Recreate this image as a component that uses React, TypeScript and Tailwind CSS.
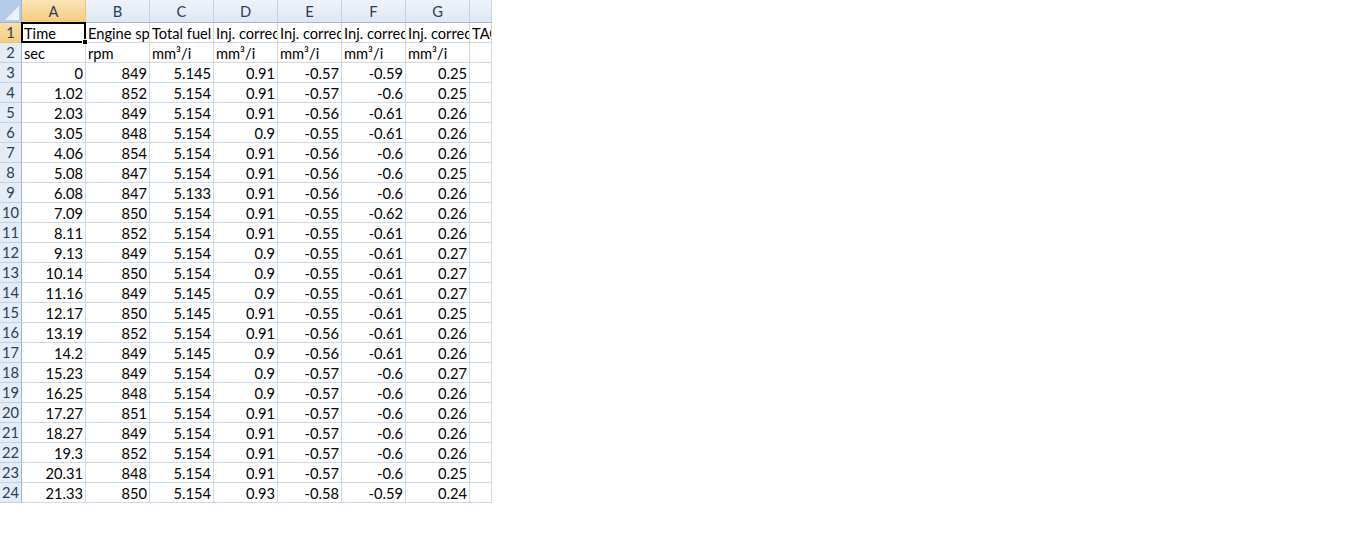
import React from "react";

const cols = ["A", "B", "C", "D", "E", "F", "G", "H"];

const row1 = ["Time", "Engine speed", "Total fuel", "Inj. correction", "Inj. correction", "Inj. correction", "Inj. correction", "TAC"];
const row2 = ["sec", "rpm", "mm³/i", "mm³/i", "mm³/i", "mm³/i", "mm³/i", ""];

const data: string[][] = [
  ["0", "849", "5.145", "0.91", "-0.57", "-0.59", "0.25"],
  ["1.02", "852", "5.154", "0.91", "-0.57", "-0.6", "0.25"],
  ["2.03", "849", "5.154", "0.91", "-0.56", "-0.61", "0.26"],
  ["3.05", "848", "5.154", "0.9", "-0.55", "-0.61", "0.26"],
  ["4.06", "854", "5.154", "0.91", "-0.56", "-0.6", "0.26"],
  ["5.08", "847", "5.154", "0.91", "-0.56", "-0.6", "0.25"],
  ["6.08", "847", "5.133", "0.91", "-0.56", "-0.6", "0.26"],
  ["7.09", "850", "5.154", "0.91", "-0.55", "-0.62", "0.26"],
  ["8.11", "852", "5.154", "0.91", "-0.55", "-0.61", "0.26"],
  ["9.13", "849", "5.154", "0.9", "-0.55", "-0.61", "0.27"],
  ["10.14", "850", "5.154", "0.9", "-0.55", "-0.61", "0.27"],
  ["11.16", "849", "5.145", "0.9", "-0.55", "-0.61", "0.27"],
  ["12.17", "850", "5.145", "0.91", "-0.55", "-0.61", "0.25"],
  ["13.19", "852", "5.154", "0.91", "-0.56", "-0.61", "0.26"],
  ["14.2", "849", "5.145", "0.9", "-0.56", "-0.61", "0.26"],
  ["15.23", "849", "5.154", "0.9", "-0.57", "-0.6", "0.27"],
  ["16.25", "848", "5.154", "0.9", "-0.57", "-0.6", "0.26"],
  ["17.27", "851", "5.154", "0.91", "-0.57", "-0.6", "0.26"],
  ["18.27", "849", "5.154", "0.91", "-0.57", "-0.6", "0.26"],
  ["19.3", "852", "5.154", "0.91", "-0.57", "-0.6", "0.26"],
  ["20.31", "848", "5.154", "0.91", "-0.57", "-0.6", "0.25"],
  ["21.33", "850", "5.154", "0.93", "-0.58", "-0.59", "0.24"],
];

function RowHeader({ n, active }: { n: number; active?: boolean }) {
  return (
    <div
      className={
        "box-border flex h-[20px] w-[22px] shrink-0 items-center justify-center border-r border-b pt-[1px] " +
        (active
          ? "border-r-[#f29436] border-b-[#f2c36f] bg-gradient-to-b from-[#f9dea8] to-[#f5cd82] text-[#2a3d55]"
          : "border-r-[#9eb6ce] border-b-[#c5d1e0] bg-[#e4ecf7] text-[#2a3d55]")
      }
    >
      {n}
    </div>
  );
}

function Cell({ text, right, w }: { text: string; right?: boolean; w?: string }) {
  return (
    <div
      className={
        "box-border h-[20px] shrink-0 overflow-hidden whitespace-nowrap border-r border-b border-[#d0d7e5] leading-[21px] " +
        (w ?? "w-[64px]") +
        (right ? " pr-[2px] text-right" : " pl-[2px] text-left")
      }
    >
      {text}
    </div>
  );
}

export default function App() {
  return (
    <div className="min-h-[558px] w-full bg-white">
      <div
        className="relative w-[492px] text-[14.67px] text-black"
        style={{ fontFamily: "Lato, 'Liberation Sans', sans-serif" }}
      >
        {/* header row */}
        <div className="flex h-[23px]">
          <div className="relative box-border h-[23px] w-[22px] shrink-0 border-r border-b border-[#9eb6ce] bg-[#b4cbe9]">
            <svg className="absolute right-[2px] bottom-[2px]" width="14" height="14" viewBox="0 0 14 14">
              <defs>
                <linearGradient id="tri" x1="0" y1="0" x2="1" y2="1">
                  <stop offset="0" stopColor="#d8e4f4" />
                  <stop offset="1" stopColor="#f4f8fd" />
                </linearGradient>
              </defs>
              <polygon points="14,0 14,14 0,14" fill="url(#tri)" />
            </svg>
          </div>
          {cols.map((c, i) => (
            <div
              key={c}
              className={
                "box-border flex h-[23px] shrink-0 items-center justify-center border-r border-b pt-[1px] text-[#2a3d55] " +
                (i === 7 ? "w-[22px] " : "w-[64px] ") +
                (i === 0
                  ? "border-r-[#f2c36f] border-b-[#f29436] bg-gradient-to-b from-[#fae4b8] to-[#f7cb7c]"
                  : "border-r-[#c5d1e0] border-b-[#9eb6ce] bg-gradient-to-b from-[#eef3fa] to-[#dfe7f2]")
              }
            >
              {i === 7 ? "" : c}
            </div>
          ))}
        </div>

        {/* row 1 */}
        <div className="flex">
          <RowHeader n={1} active />
          {row1.map((t, i) => (
            <Cell key={i} text={t} w={i === 7 ? "w-[22px]" : undefined} />
          ))}
        </div>
        {/* row 2 */}
        <div className="flex">
          <RowHeader n={2} />
          {row2.map((t, i) => (
            <Cell key={i} text={t} w={i === 7 ? "w-[22px]" : undefined} />
          ))}
        </div>
        {data.map((r, ri) => (
          <div className="flex" key={ri}>
            <RowHeader n={ri + 3} />
            {r.map((t, i) => (
              <Cell key={i} text={t} right />
            ))}
            <Cell text="" w="w-[22px]" />
          </div>
        ))}

        {/* active cell border */}
        <div className="pointer-events-none absolute top-[22px] left-[21px] box-border h-[21px] w-[65px] border-2 border-black" />
        <div className="pointer-events-none absolute top-[39px] left-[82px] h-[6px] w-[6px] border border-white bg-black" />
      </div>
    </div>
  );
}
